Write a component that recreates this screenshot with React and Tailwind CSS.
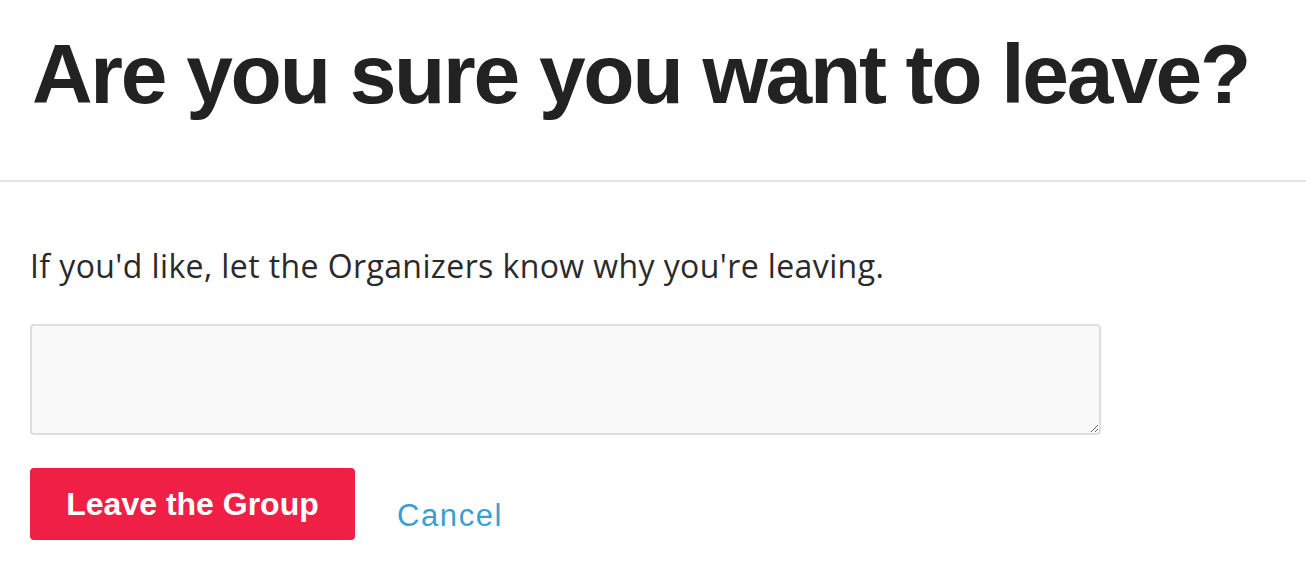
const App = () => {
  return (
    <div className="min-h-screen bg-white text-[#222222]" style={{ fontFamily: '"Liberation Sans", Arial, sans-serif' }}>
      {/* Heading */}
      <div className="h-[182px] border-b-2 border-[#e3e3e3] px-8 pt-[26px]">
        <h1 className="whitespace-nowrap text-[84px] font-bold leading-[96px] tracking-[-2.3px]">
          Are you sure you want to leave?
        </h1>
      </div>

      {/* Body */}
      <div className="px-[30px] pt-[64px]">
        <p className="text-[32px] leading-[40px] tracking-[0.4px] text-[#2a2a2a]" style={{ fontFamily: '"Open Sans", sans-serif' }}>
          If you'd like, let the Organizers know why you're leaving.
        </p>

        <textarea className="mt-[38px] block h-[111px] w-[1071px] rounded-[4px] border-2 border-[#dedede] bg-[#f9f9f9] p-3 text-[20px] outline-none" />

        <div className="mt-[33px] flex items-start gap-[42px]">
          <button className="h-[72px] w-[325px] rounded-[4px] bg-[#f01f45] text-[32px] font-bold text-white">
            Leave the Group
          </button>
          <a href="#" className="mt-[30px] text-[31px] leading-[36px] tracking-[1.6px] text-[#3a9fd0]">
            Cancel
          </a>
        </div>
      </div>
    </div>
  );
};

export default App;
